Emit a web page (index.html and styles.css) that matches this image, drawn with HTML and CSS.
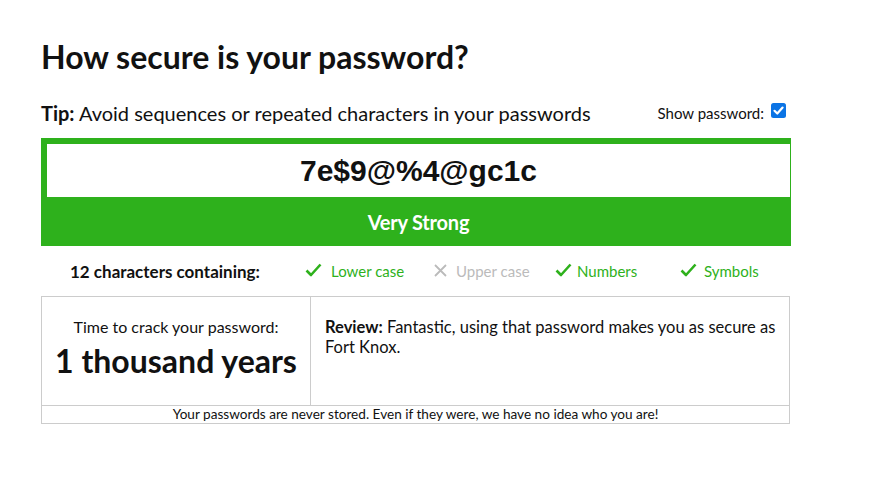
FILE: index.html
```html
<!DOCTYPE html>
<html>
<head>
<meta charset="utf-8">
<link rel="stylesheet" href="styles.css">
</head>
<body>
<div class="wrap">
  <h1 class="title">How secure is your password?</h1>
  <div class="tiprow">
    <p class="tip"><b>Tip:</b> Avoid sequences or repeated characters in your passwords</p>
    <label class="show">Show password: <span class="cb"><svg width="15" height="15" viewBox="0 0 15 15"><rect x="0" y="0" width="15" height="15" rx="2.5" fill="#0b74e5"/><path d="M3.5 7.8 L6.3 10.5 L11.6 4.6" fill="none" stroke="#fff" stroke-width="2.2" stroke-linecap="round" stroke-linejoin="round"/></svg></span></label>
  </div>
  <div class="meter">
    <div class="pw">7e$9@%4@gc1c</div>
    <div class="strength">Very Strong</div>
  </div>
  <div class="checks">
    <span class="count">12 characters containing:</span>
    <span class="item ok i1"><svg class="mark" width="17" height="14" viewBox="0 0 17 14"><path d="M1.5 7.5 L6 12 L15.5 1.5" fill="none" stroke="currentColor" stroke-width="2.6" stroke-linejoin="round"/></svg>Lower case</span>
    <span class="item no i2"><svg class="mark x" width="13" height="13" viewBox="0 0 13 13"><path d="M1 1 L12 12 M12 1 L1 12" fill="none" stroke="currentColor" stroke-width="1.8"/></svg>Upper case</span>
    <span class="item ok i3"><svg class="mark" width="17" height="14" viewBox="0 0 17 14"><path d="M1.5 7.5 L6 12 L15.5 1.5" fill="none" stroke="currentColor" stroke-width="2.6" stroke-linejoin="round"/></svg>Numbers</span>
    <span class="item ok i4"><svg class="mark" width="17" height="14" viewBox="0 0 17 14"><path d="M1.5 7.5 L6 12 L15.5 1.5" fill="none" stroke="currentColor" stroke-width="2.6" stroke-linejoin="round"/></svg>Symbols</span>
  </div>
  <div class="results">
    <div class="row">
      <div class="crack">
        <div class="crack-label">Time to crack your password:</div>
        <div class="crack-time">1 thousand years</div>
      </div>
      <div class="review"><b>Review:</b> Fantastic, using that password makes you as secure as Fort Knox.</div>
    </div>
    <div class="foot">Your passwords are never stored. Even if they were, we have no idea who you are!</div>
  </div>
</div>
</body>
</html>
```
FILE: styles.css
```css
html, body { margin: 0; padding: 0; background: #fff; }
body { font-family: Lato, "Open Sans", sans-serif; color: #111; }
.wrap { width: 750px; margin-left: 41px; padding-top: 38px; }
.title { margin: 0; font-size: 32px; font-weight: 700; line-height: 38px; color: #111; }
.tiprow { display: flex; justify-content: space-between; align-items: flex-start; margin-top: 25px; height: 37px; }
.tip { margin: 0; font-size: 20px; line-height: 24px; }
.tip b { font-weight: 700; }
.show { font-size: 15px; line-height: 18px; display: flex; align-items: center; gap: 7px; margin-top: 3px; margin-right: 5px; }
.cb { display: inline-flex; width: 15px; height: 15px; margin-top: -6px; }
.meter { background: #2eb11c; padding: 6px 1px 0 6px; }
.pw { background: #fff; height: 53px; display: flex; align-items: center; justify-content: center; font-family: "Liberation Sans", Arial, sans-serif; font-weight: 700; font-size: 30px; color: #111; }
.strength { height: 49px; display: flex; align-items: center; justify-content: center; color: #fff; font-weight: 700; font-size: 20px; letter-spacing: -0.2px; }
.checks { height: 50px; display: flex; align-items: center; font-size: 15px; }
.count { font-weight: 700; font-size: 17px; margin-left: 29px; width: 235px; }
.item { display: inline-flex; align-items: center; }
.mark { margin-right: 9px; margin-top: -2px; flex: none; }
.ok { color: #2eb11c; }
.no { color: #bbb; }
.x { margin-right: 9px; }
.i1 { width: 129px; }
.i2 { width: 121px; }
.i3 { width: 125px; }
.i3 .mark { margin-right: 5px; }
.i4 .mark { margin-right: 7px; }
.results { border: 1px solid #ccc; width: 747px; }
.row { display: flex; height: 108px; border-bottom: 1px solid #ccc; }
.crack { width: 269px; border-right: 1px solid #ccc; text-align: center; padding-top: 20px; box-sizing: border-box; }
.crack-label { font-size: 16px; line-height: 20px; }
.crack-time { font-size: 32px; font-weight: 700; line-height: 38px; margin-top: 5px; }
.review { flex: 1; padding: 20px 12px 0 14px; font-size: 16.5px; line-height: 20px; }
.review b { font-weight: 700; }
.foot { font-size: 13.6px; line-height: 17px; text-align: center; }
```
